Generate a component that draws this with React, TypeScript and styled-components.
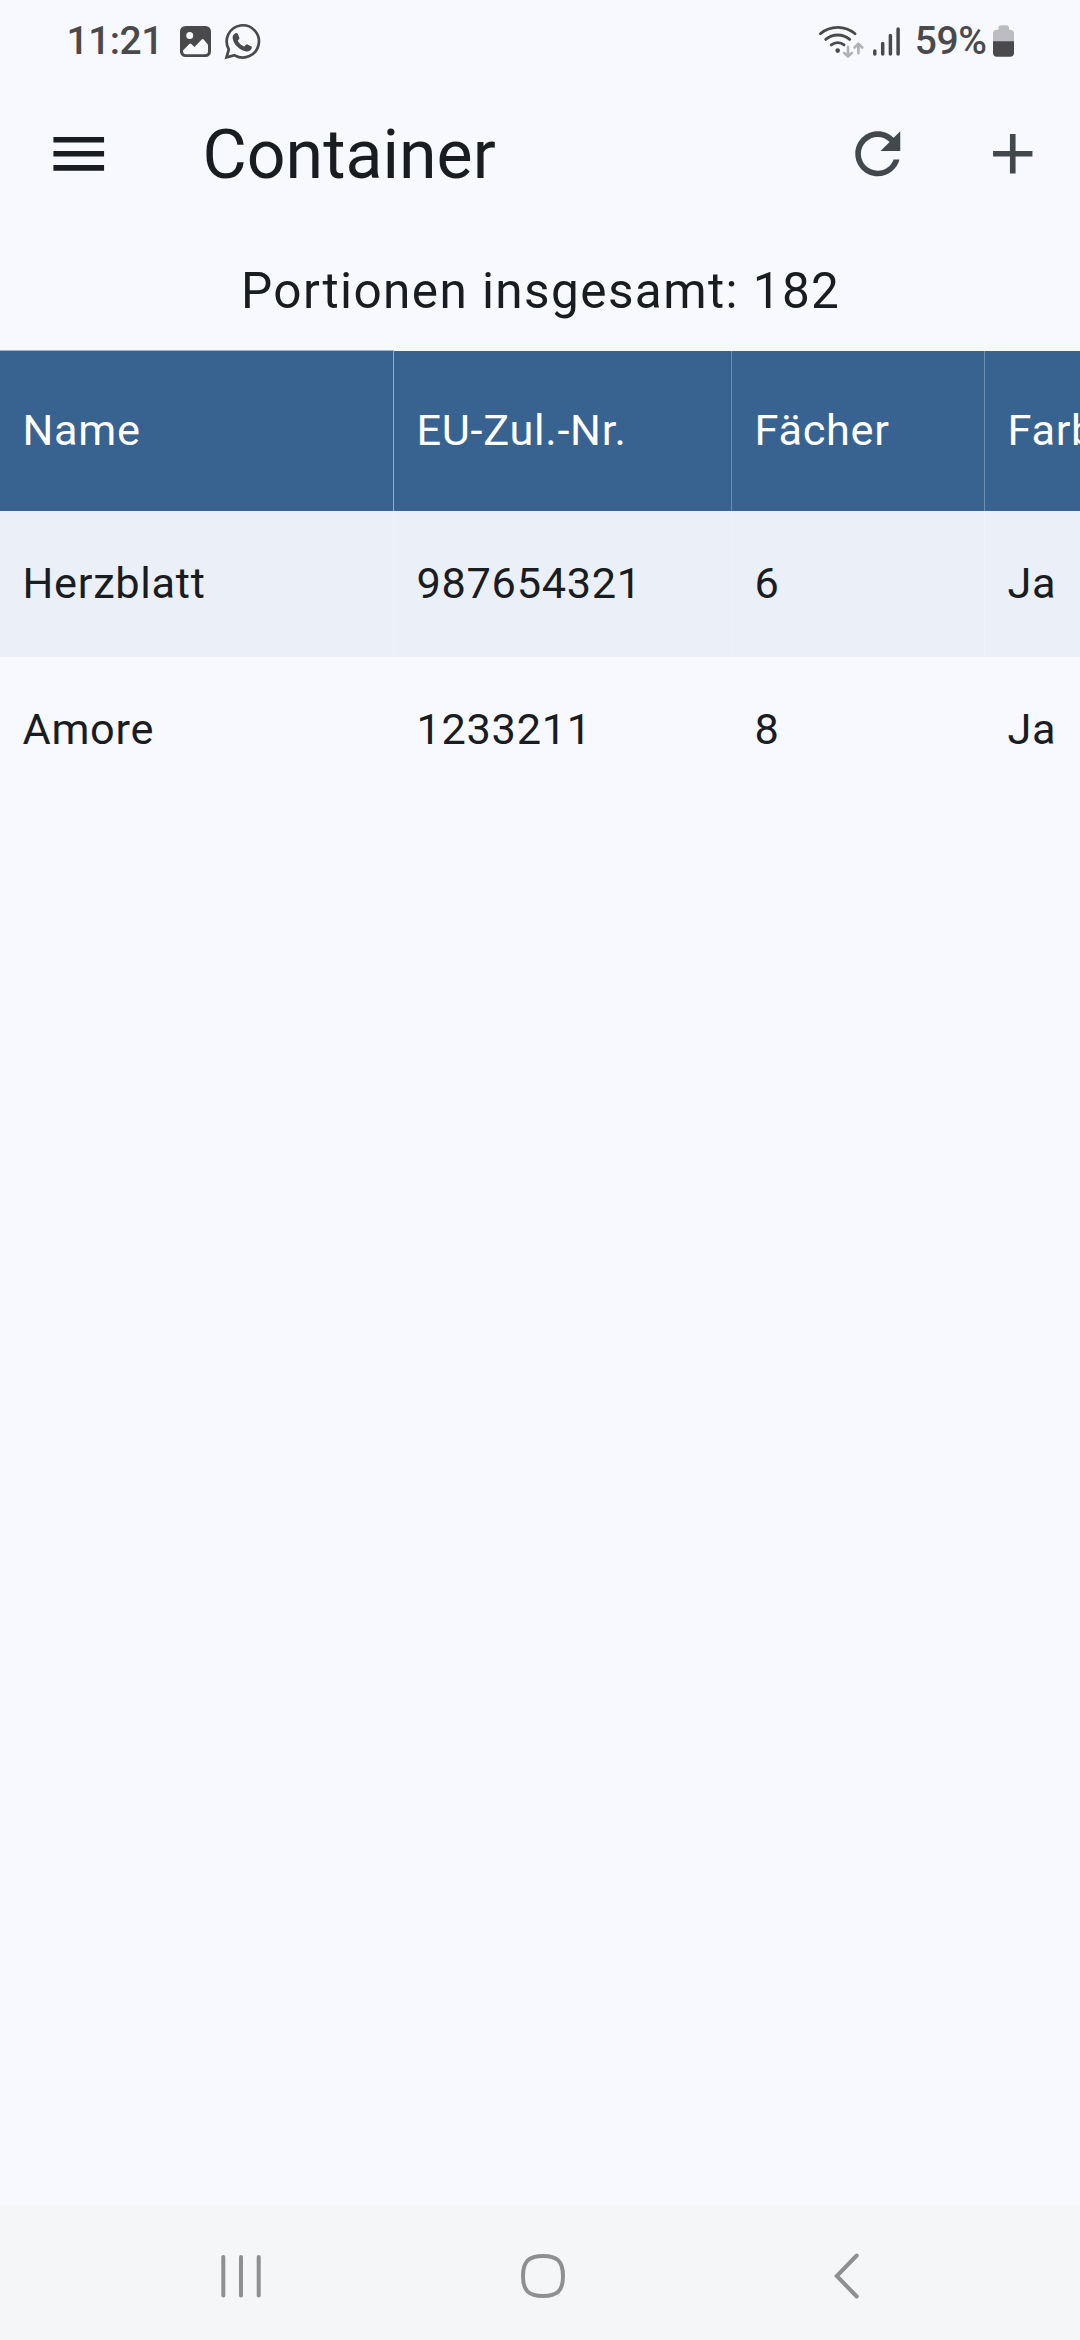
import React from "react";
import styled, { createGlobalStyle } from "styled-components";

const GlobalStyle = createGlobalStyle`
  html, body {
    margin: 0;
    padding: 0;
    background: #f8f9ff;
  }
  * { box-sizing: border-box; }
`;

const Screen = styled.div`
  width: 1080px;
  height: 2340px;
  display: flex;
  flex-direction: column;
  overflow: hidden;
  background: #f8f9ff;
  color: #191c20;
  font-family: Roboto, "Noto Sans", sans-serif;
`;

const StatusBar = styled.header`
  height: 76px;
  flex: none;
  display: flex;
  justify-content: space-between;
  padding: 0 65px 0 66px;
  color: #4a4a4c;
`;

const StatusGroup = styled.div`
  display: flex;
  height: 82px;
  align-items: center;
`;

const StatusText = styled.span<{ $width: number; $indent: number; $spacing: number }>`
  width: ${(p) => p.$width}px;
  padding-left: ${(p) => p.$indent}px;
  font-size: 39px;
  font-weight: 500;
  line-height: 82px;
  letter-spacing: ${(p) => p.$spacing}px;
  white-space: nowrap;
`;

const Glyph = styled.svg`
  display: block;
  flex: none;
`;

const AppBar = styled.div`
  height: 158px;
  flex: none;
  display: flex;
  align-items: center;
  padding: 0 33.7px 2px 45px;
`;

const IconButton = styled.button<{ $color: string; $gap?: number }>`
  display: flex;
  padding: 0;
  margin: 0 0 0 ${(p) => p.$gap ?? 0}px;
  border: 0;
  background: none;
  color: ${(p) => p.$color};
`;

const Title = styled.h1`
  flex: 1;
  margin: 1px 0 0 90px;
  font-size: 68.06px;
  font-weight: 400;
  line-height: 80px;
`;

const Summary = styled.p`
  height: 117px;
  flex: none;
  margin: 0;
  padding-left: 1.4px;
  font-size: 49.5px;
  line-height: 115px;
  letter-spacing: 1.406px;
  text-align: center;
`;

const Table = styled.div`
  flex: 1;
`;

const Row = styled.div<{ $kind: "head" | "odd" | "even" }>`
  display: grid;
  grid-template-columns: 394px 338px 253px 253px;
  width: 1238px;
  height: ${(p) => (p.$kind === "head" ? 160 : 146)}px;
  background: ${(p) =>
    p.$kind === "head" ? "#38628f" : p.$kind === "odd" ? "#ebeff8" : "#f8f9ff"};
  color: ${(p) => (p.$kind === "head" ? "#ffffff" : "#191c20")};
`;

const Cell = styled.div<{ $line: string; $topLine?: string }>`
  display: flex;
  align-items: center;
  padding: 0 0 2px 22.5px;
  border-right: 1px solid ${(p) => p.$line};
  box-shadow: ${(p) => (p.$topLine ? `0 -1px 0 ${p.$topLine}` : "none")};
  font-size: 43.31px;
  letter-spacing: 0.703px;
  white-space: nowrap;
`;

const NavBar = styled.nav`
  height: 135px;
  flex: none;
  display: grid;
  grid-template-columns: repeat(3, 1fr);
  align-items: center;
  justify-items: center;
  padding: 6px 83px 0 90px;
  background: #f5f6f8;
  color: #8f8f8f;
`;

const columns = ["Name", "EU-Zul.-Nr.", "Fächer", "Farbe"];
const rows = [
  ["Herzblatt", "987654321", "6", "Ja"],
  ["Amore", "1233211", "8", "Ja"],
];

const MaterialIcon = ({ d }: { d: string }) => (
  <Glyph width="67.5" height="67.5" viewBox="0 0 24 24" fill="currentColor">
    <path d={d} />
  </Glyph>
);

const NotificationIcons = () => (
  <Glyph width="84" height="82" viewBox="178 0 84 82" fill="none">
    <path
      fillRule="evenodd"
      fill="currentColor"
      d="M185.5 26h20a5.5 5.5 0 0 1 5.5 5.5v20a5.5 5.5 0 0 1-5.5 5.5h-20a5.5 5.5 0 0 1-5.5-5.5v-20a5.5 5.5 0 0 1 5.5-5.5zM189.7 32a3.5 3.5 0 1 0 0 7 3.5 3.5 0 0 0 0-7zM183 50.5v.8a3 3 0 0 0 3 3h19a3 3 0 0 0 3-3v-6.5l-4.3-5.2q-1-1-2 0l-7.2 7.3-3.2-3q-1-.8-2 0z"
    />
    <path
      stroke="currentColor"
      strokeWidth="2.7"
      strokeLinejoin="miter"
      d="M226.5 57.4l2.3-8.1a16.1 16.1 0 1 1 5.9 6z"
    />
    <path
      fill="currentColor"
      d="M235.5 33.2c.9-.4 1.9-.2 2.3.8l1.5 3.5c.3.8 0 1.5-.6 2.1l-1 1.1c1.5 2.6 3.6 4.6 6.5 5.9l1.5-1.7c.5-.6 1.1-.7 1.8-.4l3.6 1.8c.7.4.9.9.7 1.7-.7 2.6-3.2 3.8-5.7 3.4-6.7-1.2-12.8-7.1-13.5-13.4-.2-2 .9-4.1 2.9-4.8z"
    />
  </Glyph>
);

const ConnectionIcons = () => (
  <Glyph width="84" height="82" viewBox="818 0 84 82" fill="none" strokeLinecap="round" strokeLinejoin="round">
    <g stroke="currentColor" strokeWidth="2.8">
      <path d="M820.3 33.7a27 27 0 0 1 34.8 0" />
      <path d="M825.7 39.4a18.5 18.5 0 0 1 24 0" />
      <path d="M831.3 44.9a10 10 0 0 1 12.8 0" />
    </g>
    <circle cx="837.7" cy="50.6" r="2.3" fill="currentColor" />
    <g stroke="#b1b1b5" strokeWidth="2.6">
      <path d="M848 47v9.5M844.2 52.8l3.8 3.8 3.8-3.8" />
      <path d="M858.4 53.3v-9.5M854.6 47.5l3.8-3.8 3.8 3.8" />
    </g>
    <g stroke="currentColor" strokeWidth="3.5">
      <path d="M874.8 51v3M882.7 43.5V54M890.4 35.5V54M898.1 29V54" />
    </g>
  </Glyph>
);

const BatteryIcon = () => (
  <Glyph width="22" height="82" viewBox="993 0 22 82">
    <path
      fill="#bcbcc2"
      d="M1001 25.3h5.5a2.5 2.5 0 0 1 2.5 2.5v2h1a4 4 0 0 1 4 4V42h-21v-8.2a4 4 0 0 1 4-4h1.5v-2a2.5 2.5 0 0 1 2.5-2.5z"
    />
    <path fill="currentColor" d="M993 41.3h21v11.5a4 4 0 0 1-4 4h-13a4 4 0 0 1-4-4z" />
  </Glyph>
);

export default function App() {
  return (
    <Screen>
      <GlobalStyle />
      <StatusBar>
        <StatusGroup>
          <StatusText $width={112} $indent={0.5} $spacing={-0.5}>11:21</StatusText>
          <NotificationIcons />
        </StatusGroup>
        <StatusGroup>
          <ConnectionIcons />
          <StatusText $width={91} $indent={12.7} $spacing={-0.4}>59%</StatusText>
          <BatteryIcon />
        </StatusGroup>
      </StatusBar>
      <AppBar>
        <IconButton $color="#191c20" aria-label="Menu">
          <MaterialIcon d="M3 18h18v-2H3v2zm0-5h18v-2H3v2zm0-7v2h18V6H3z" />
        </IconButton>
        <Title>Container</Title>
        <IconButton $color="#43474e" aria-label="Refresh">
          <MaterialIcon d="M17.65 6.35C16.2 4.9 14.21 4 12 4c-4.42 0-7.99 3.58-7.99 8s3.57 8 7.99 8c3.73 0 6.84-2.55 7.73-6h-2.08c-.82 2.33-3.04 4-5.65 4-3.31 0-6-2.69-6-6s2.69-6 6-6c1.66 0 3.14.69 4.22 1.78L13 11h7V4l-2.35 2.35z" />
        </IconButton>
        <IconButton $color="#43474e" $gap={67.5} aria-label="Add">
          <MaterialIcon d="M19 13h-6v6h-2v-6H5v-2h6V5h2v6h6v2z" />
        </IconButton>
      </AppBar>
      <Summary>Portionen insgesamt: 182</Summary>
      <Table>
        <Row $kind="head">
          {columns.map((c, i) => (
            <Cell key={c} $line={i === 0 ? "#91abc6" : "#6f8eb0"} $topLine={i === 0 ? "#9fb6ce" : undefined}>
              {c}
            </Cell>
          ))}
        </Row>
        {rows.map((r, i) => (
          <Row key={r[0]} $kind={i % 2 === 0 ? "odd" : "even"}>
            {r.map((v, j) => (
              <Cell key={j} $line={i % 2 === 0 ? "#eff2fa" : "#f8f9ff"}>
                {v}
              </Cell>
            ))}
          </Row>
        ))}
      </Table>
      <NavBar>
        <Glyph width="44" height="48" viewBox="0 0 44 48" stroke="currentColor" strokeWidth="4" strokeLinecap="round">
          <path d="M4.3 5v38.5M22 5v38.5M39.7 5v38.5" />
        </Glyph>
        <Glyph width="44" height="44" viewBox="0 0 44 44" fill="none" stroke="currentColor" strokeWidth="4">
          <path d="M22 2C36 2 42 7 42 22S36 42 22 42 2 37 2 22 8 2 22 2z" />
        </Glyph>
        <Glyph width="30" height="48" viewBox="0 0 30 48" fill="none" stroke="currentColor" strokeWidth="4" strokeLinecap="round">
          <path d="M25.7 3.5L5.8 24l19.900 20.500" />
        </Glyph>
      </NavBar>
    </Screen>
  );
}
